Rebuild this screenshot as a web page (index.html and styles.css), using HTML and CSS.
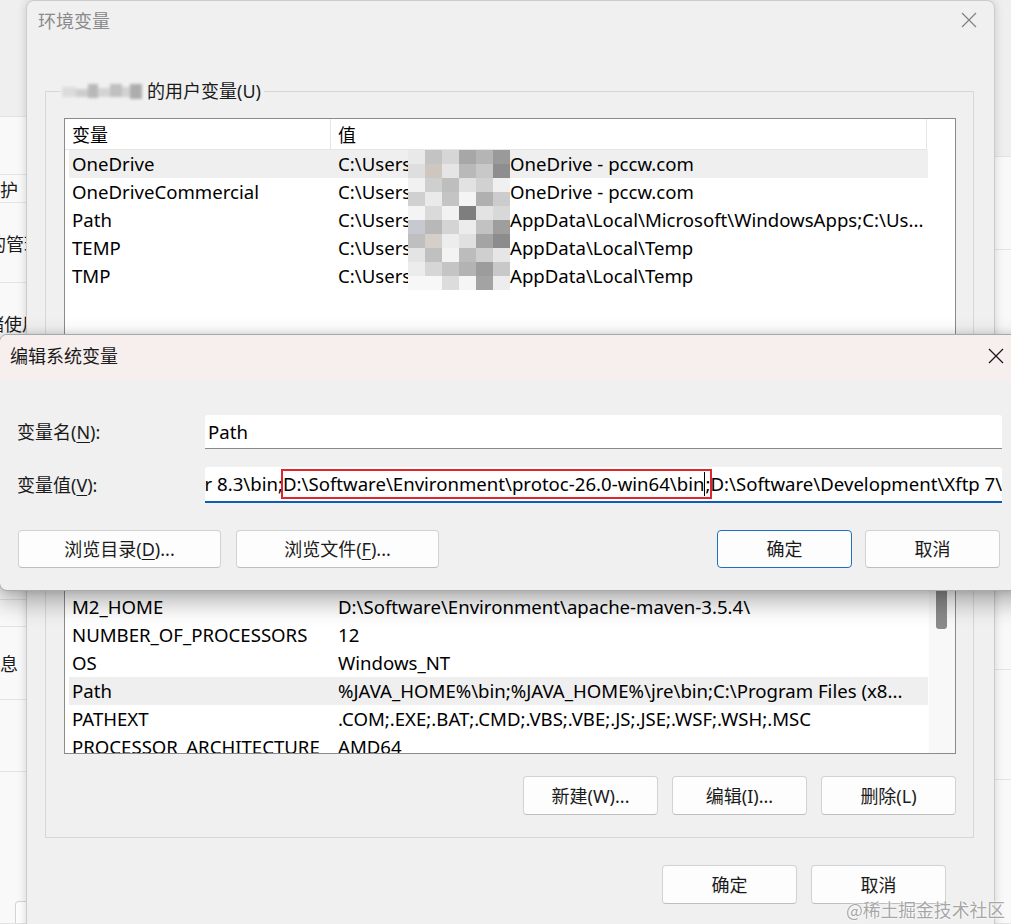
FILE: index.html
```html
<!DOCTYPE html>
<html lang="zh-CN">
<head>
<meta charset="utf-8">
<title>环境变量</title>
<link rel="stylesheet" href="styles.css">
</head>
<body>
<div class="desktop">

  <div class="bgwin">
    <div class="bg-left">
      <div class="bgrow h117 top"></div>
      <div class="bgrow h58"></div>
      <div class="bgrow h28"><span class="bglbl e18">系统保护</span></div>
      <div class="bgrow h80"><span class="bglbl e42">默认应用的管理</span></div>
      <div class="bgrow h80"><span class="bglbl e40">存储使用</span></div>
      <div class="bgrow h237"></div>
      <div class="bgrow h27"></div>
      <div class="bgrow h73"><span class="bglbl e18">系统信息</span></div>
      <div class="bgrow h72"></div>
      <div class="bgrow grow"><div class="bgbtn"></div></div>
    </div>
    <div class="bg-mid"></div>
    <div class="bg-right">
      <div class="bgrow h157 top"></div>
      <div class="bgrow h93"></div>
      <div class="bgrow h420"></div>
      <div class="bgrow h110"></div>
      <div class="bgrow grow"></div>
    </div>
  </div>

  <section class="envwin">
    <header class="env-title">
      <span class="env-title-text">环境变量</span>
      <svg class="close-ico" width="16" height="16" viewBox="0 0 16 16"><path d="M1 1L15 15M15 1L1 15" stroke="#808080" stroke-width="1.2" fill="none"/></svg>
    </header>
    <div class="env-body">
      <fieldset class="group user-group">
        <legend class="legend">
          <svg class="blur-name" width="84" height="22" viewBox="0 0 84 22">
            <defs><filter id="bl" x="-10%" y="-30%" width="120%" height="160%"><feGaussianBlur stdDeviation="1.8"/></filter></defs>
            <g filter="url(#bl)">
              <rect x="2" y="7" width="14" height="10" fill="#dcdcdc"/>
              <rect x="16" y="9" width="12" height="8" fill="#cdcdcd"/>
              <rect x="28" y="4" width="10" height="14" fill="#b8b8b8"/>
              <rect x="38" y="8" width="12" height="9" fill="#d4d4d4"/>
              <rect x="50" y="4" width="12" height="13" fill="#c0c0c0"/>
              <rect x="62" y="7" width="8" height="10" fill="#d2d2d2"/>
              <rect x="70" y="4" width="12" height="15" fill="#adadad"/>
            </g>
          </svg><span>的用户变量(U)</span>
        </legend>
        <div class="list user-list">
          <div class="lv-main">
            <div class="lv-head"><div class="hc1">变量</div><div class="hc2">值</div></div>
            <div class="lv-row sel"><div class="c1">OneDrive</div><div class="c2"><span class="upre">C:\Users\</span><svg class="mosaic" width="102" height="28" viewBox="0 0 102 28"><rect x="0" y="0" width="17" height="14" fill="#e9e9e9"/><rect x="17" y="0" width="17" height="14" fill="#c3c3c3"/><rect x="34" y="0" width="17" height="14" fill="#d6d6d6"/><rect x="51" y="0" width="17" height="14" fill="#a7a7a7"/><rect x="68" y="0" width="17" height="14" fill="#b5b5b5"/><rect x="85" y="0" width="17" height="14" fill="#9a9a9a"/><rect x="0" y="14" width="17" height="14" fill="#dedede"/><rect x="17" y="14" width="17" height="14" fill="#cdc7c0"/><rect x="34" y="14" width="17" height="14" fill="#e5e5e5"/><rect x="51" y="14" width="17" height="14" fill="#b9b9b9"/><rect x="68" y="14" width="17" height="14" fill="#c8c8c8"/><rect x="85" y="14" width="17" height="14" fill="#8e8e8e"/></svg>OneDrive - pccw.com</div></div>
            <div class="lv-row"><div class="c1">OneDriveCommercial</div><div class="c2"><span class="upre">C:\Users\</span><svg class="mosaic" width="102" height="28" viewBox="0 0 102 28"><rect x="0" y="0" width="17" height="14" fill="#f1f1f1"/><rect x="17" y="0" width="17" height="14" fill="#cfcfcf"/><rect x="34" y="0" width="17" height="14" fill="#bebebe"/><rect x="51" y="0" width="17" height="14" fill="#e2e2e2"/><rect x="68" y="0" width="17" height="14" fill="#d1d1d1"/><rect x="85" y="0" width="17" height="14" fill="#f0f0f0"/><rect x="0" y="14" width="17" height="14" fill="#d0d0d0"/><rect x="17" y="14" width="17" height="14" fill="#eaeaea"/><rect x="34" y="14" width="17" height="14" fill="#c4c4c4"/><rect x="51" y="14" width="17" height="14" fill="#f4f4f4"/><rect x="68" y="14" width="17" height="14" fill="#b0b0b0"/><rect x="85" y="14" width="17" height="14" fill="#cccccc"/></svg>OneDrive - pccw.com</div></div>
            <div class="lv-row"><div class="c1">Path</div><div class="c2"><span class="upre">C:\Users\</span><svg class="mosaic" width="102" height="28" viewBox="0 0 102 28"><rect x="0" y="0" width="17" height="14" fill="#f4f4f4"/><rect x="17" y="0" width="17" height="14" fill="#dadada"/><rect x="34" y="0" width="17" height="14" fill="#f2f2f2"/><rect x="51" y="0" width="17" height="14" fill="#7e7e7e"/><rect x="68" y="0" width="17" height="14" fill="#e3e3e3"/><rect x="85" y="0" width="17" height="14" fill="#d8d8d8"/><rect x="0" y="14" width="17" height="14" fill="#c6c9d0"/><rect x="17" y="14" width="17" height="14" fill="#b8b8b8"/><rect x="34" y="14" width="17" height="14" fill="#d4d4d4"/><rect x="51" y="14" width="17" height="14" fill="#ececec"/><rect x="68" y="14" width="17" height="14" fill="#c2c2c2"/><rect x="85" y="14" width="17" height="14" fill="#9e9e9e"/></svg>AppData\Local\Microsoft\WindowsApps;C:\Us...</div></div>
            <div class="lv-row"><div class="c1">TEMP</div><div class="c2"><span class="upre">C:\Users\</span><svg class="mosaic" width="102" height="28" viewBox="0 0 102 28"><rect x="0" y="0" width="17" height="14" fill="#bfbfbf"/><rect x="17" y="0" width="17" height="14" fill="#d5cfca"/><rect x="34" y="0" width="17" height="14" fill="#ededed"/><rect x="51" y="0" width="17" height="14" fill="#e0e0e0"/><rect x="68" y="0" width="17" height="14" fill="#a4a4a4"/><rect x="85" y="0" width="17" height="14" fill="#8c8c8c"/><rect x="0" y="14" width="17" height="14" fill="#e4e4e4"/><rect x="17" y="14" width="17" height="14" fill="#c0c0c0"/><rect x="34" y="14" width="17" height="14" fill="#f3f3f3"/><rect x="51" y="14" width="17" height="14" fill="#bcbcbc"/><rect x="68" y="14" width="17" height="14" fill="#cfcfcf"/><rect x="85" y="14" width="17" height="14" fill="#e6e6e6"/></svg>AppData\Local\Temp</div></div>
            <div class="lv-row"><div class="c1">TMP</div><div class="c2"><span class="upre">C:\Users\</span><svg class="mosaic" width="102" height="28" viewBox="0 0 102 28"><rect x="0" y="0" width="17" height="14" fill="#ececec"/><rect x="17" y="0" width="17" height="14" fill="#d6d6d6"/><rect x="34" y="0" width="17" height="14" fill="#c4c4c4"/><rect x="51" y="0" width="17" height="14" fill="#b3b3b3"/><rect x="68" y="0" width="17" height="14" fill="#9c9c9c"/><rect x="85" y="0" width="17" height="14" fill="#c8c8c8"/><rect x="0" y="14" width="17" height="14" fill="#f7f7f7"/><rect x="17" y="14" width="17" height="14" fill="#f7f7f7"/><rect x="34" y="14" width="17" height="14" fill="#dcdcdc"/><rect x="51" y="14" width="17" height="14" fill="#f5f5f5"/><rect x="68" y="14" width="17" height="14" fill="#a3a3a3"/><rect x="85" y="14" width="17" height="14" fill="#ededed"/></svg>AppData\Local\Temp</div></div>
          </div>
        </div>
        <div class="btnrow">
          <button class="btn">新建(N)...</button>
          <button class="btn">编辑(E)...</button>
          <button class="btn">删除(D)</button>
        </div>
      </fieldset>

      <fieldset class="group sys-group">
        <legend class="legend"><span>系统变量(S)</span></legend>
        <div class="list sys-list">
          <div class="lv-main">
            <div class="lv-head"><div class="hc1">变量</div><div class="hc2">值</div></div>
            <div class="lv-row"><div class="c1">ComSpec</div><div class="c2">C:\Windows\system32\cmd.exe</div></div>
            <div class="lv-row"><div class="c1">DriverData</div><div class="c2">C:\Windows\System32\Drivers\DriverData</div></div>
            <div class="lv-row"><div class="c1">JAVA_HOME</div><div class="c2">D:\Software\Environment\jdk1.8.0_181</div></div>
            <div class="lv-row"><div class="c1">M2_HOME</div><div class="c2">D:\Software\Environment\apache-maven-3.5.4\</div></div>
            <div class="lv-row"><div class="c1">NUMBER_OF_PROCESSORS</div><div class="c2">12</div></div>
            <div class="lv-row"><div class="c1">OS</div><div class="c2">Windows_NT</div></div>
            <div class="lv-row sel"><div class="c1">Path</div><div class="c2">%JAVA_HOME%\bin;%JAVA_HOME%\jre\bin;C:\Program Files (x8...</div></div>
            <div class="lv-row"><div class="c1">PATHEXT</div><div class="c2">.COM;.EXE;.BAT;.CMD;.VBS;.VBE;.JS;.JSE;.WSF;.WSH;.MSC</div></div>
            <div class="lv-row"><div class="c1">PROCESSOR_ARCHITECTURE</div><div class="c2">AMD64</div></div>
          </div>
          <div class="vscroll"><div class="thumb"></div></div>
        </div>
        <div class="btnrow">
          <button class="btn">新建(W)...</button>
          <button class="btn">编辑(I)...</button>
          <button class="btn">删除(L)</button>
        </div>
      </fieldset>

      <div class="env-actions">
        <button class="btn">确定</button>
        <button class="btn">取消</button>
      </div>
    </div>
  </section>

  <section class="editwin">
    <header class="edit-title">
      <span class="edit-title-text">编辑系统变量</span>
      <svg class="close-ico dark" width="16" height="16" viewBox="0 0 16 16"><path d="M1 1L15 15M15 1L1 15" stroke="#1a1a1a" stroke-width="1.3" fill="none"/></svg>
    </header>
    <div class="edit-body">
      <div class="field">
        <label class="flabel">变量名(<u>N</u>):</label>
        <div class="input">Path</div>
      </div>
      <div class="field second">
        <label class="flabel">变量值(<u>V</u>):</label>
        <div class="input focus">
          <span class="pre"><span>D:\Software\Environment\Docker 8.3\bin;</span></span><span class="mark">D:\Software\Environment\protoc-26.0-win64\bin<span class="caret"></span>;</span><span class="rest">D:\Software\Development\Xftp 7\;D:\Software\Development\Xshell 7\</span>
        </div>
      </div>
      <div class="edit-btns">
        <button class="btn wide">浏览目录(<u>D</u>)...</button>
        <button class="btn wide">浏览文件(<u>F</u>)...</button>
        <span class="spacer"></span>
        <button class="btn default">确定</button>
        <button class="btn">取消</button>
      </div>
    </div>
  </section>

  <div class="watermark">@稀土掘金技术社区</div>
</div>
</body>
</html>
```

FILE: styles.css
```css
* { box-sizing: border-box; }
html, body { margin: 0; padding: 0; }
body {
  width: 1011px;
  height: 924px;
  overflow: hidden;
  font-family: "Noto Sans", "Noto Sans CJK SC", sans-serif;
  font-size: 18px;
  color: #000;
  background: #f3f3f3;
}
u { text-decoration: underline; text-underline-offset: 3px; text-decoration-thickness: 1px; }

.desktop { position: relative; width: 1011px; height: 924px; overflow: hidden; }

/* background window */
.bgwin { position: absolute; inset: 0; display: flex; background: #f3f3f3; }
.bg-left { width: 70px; display: flex; flex-direction: column; }
.bg-mid { flex: 1; }
.bg-right { width: 40px; display: flex; flex-direction: column; }
.bgrow {
  flex: none;
  background: #f9f9f9;
  border-bottom: 1px solid #e3e3e3;
  display: flex;
  align-items: center;
  font-family: "Noto Sans CJK SC", sans-serif;
  font-size: 18px;
  line-height: 24px;
  color: #1a1a1a;
  white-space: nowrap;
  overflow: hidden;
}
.bgrow.top { background: #efefef; }
.bgrow.grow { flex: 1; align-items: flex-end; }
.h117 { height: 117px; } .h58 { height: 58px; } .h28 { height: 28px; } .h80 { height: 80px; }
.h237 { height: 237px; } .h27 { height: 27px; } .h73 { height: 73px; }
.h72 { height: 72px; } .h157 { height: 157px; } .h93 { height: 93px; } .h420 { height: 420px; }
.h110 { height: 110px; }
.bglbl { display: flex; justify-content: flex-end; flex: none; }
.e18 { width: 18px; } .e42 { width: 42px; } .e40 { width: 40px; }
.bgbtn { width: 60px; height: 22px; margin-left: 15px; border: 1px solid #d3d3d3; border-bottom: none; border-radius: 4px 4px 0 0; background: #fdfdfd; }

/* environment variables window */
.envwin {
  position: absolute;
  left: 26px;
  top: 0;
  width: 969px;
  height: 980px;
  background: #f0f0f0;
  border: 1px solid #cbcbcb;
  border-radius: 8px;
  box-shadow: 0 0 10px rgba(0,0,0,0.16);
}
.env-title {
  height: 40px;
  display: flex;
  align-items: center;
  padding-left: 11px;
  padding-right: 17px;
}
.env-title-text {
  font-family: "Noto Sans CJK SC", sans-serif;
  color: #8a8a8a;
  font-size: 18px;
  line-height: 24px;
  margin-top: -2px;
}
.close-ico { margin-left: auto; flex: none; }
.env-title .close-ico { margin-top: -2px; }

.env-body { padding: 38px 20px 0 18px; }

.group {
  margin: 0;
  border: 1px solid #d7d7d7;
  border-radius: 0;
  padding: 15px 17px 22px 18px;
  min-width: 0;
}
.legend {
  padding: 0 3px 0 0;
  margin-left: -4px;
  line-height: 24px;
  height: 24px;
  font-family: "Noto Sans", "Noto Sans CJK SC", sans-serif;
  display: flex;
  align-items: center;
  color: #1a1a1a;
}
.blur-name { flex: none; margin-right: 3px; }
.sys-group { margin-top: 9px; }

.list {
  background: #fff;
  border: 1px solid #8b8b8b;
  display: flex;
  overflow: hidden;
}
.user-list { height: 226px; }
.sys-list { height: 277px; }
.lv-main { flex: 1; min-width: 0; overflow: hidden; }
.lv-head {
  display: flex;
  height: 31px;
  width: 862px;
  border-bottom: 1px solid #e6e6e6;
  border-right: 1px solid #e6e6e6;
  font-family: "Noto Sans CJK SC", sans-serif;
  line-height: 30px;
}
.hc1 { width: 265px; padding-left: 7px; }
.hc2 { flex: 1; border-left: 1px solid #e6e6e6; padding-left: 7px; }
.lv-row {
  display: flex;
  height: 28px;
  line-height: 28px;
  width: 859px;
  margin-left: 4px;
  white-space: nowrap;
  font-size: 18.6px;
}
.lv-row.sel { background: #efefef; }
.c1 { width: 261px; padding-left: 3px; overflow: hidden; flex: none; }
.c2 { flex: 1; padding-left: 8px; overflow: hidden; display: flex; align-items: center; }
.upre { display: inline-block; width: 70px; overflow: hidden; flex: none; }
.mosaic { flex: none; display: block; }

.vscroll { width: 26px; flex: none; background: #f8f8f8; }
.thumb { width: 11px; height: 61px; margin: 90px 0 0 7px; background: #8a8a8a; border-radius: 3px; }

.btnrow { display: flex; justify-content: flex-end; gap: 14px; margin-top: 22px; }
.user-group .btnrow { margin-top: 23px; }

.btn {
  height: 39px;
  width: 135px;
  padding: 0;
  border: 1px solid #d2d2d2;
  border-bottom-color: #bebebe;
  border-radius: 4px;
  background: #fdfdfd;
  font-family: "Noto Sans", "Noto Sans CJK SC", sans-serif;
  font-size: 18px;
  line-height: 24px;
  color: #1b1b1b;
  display: flex;
  align-items: center;
  justify-content: center;
  flex: none;
}
.env-actions { display: flex; justify-content: flex-end; gap: 14px; margin-top: 27px; padding-right: 28px; }

/* edit dialog */
.editwin {
  position: absolute;
  left: -1px;
  top: 334px;
  width: 1032px;
  background: #f0f0f0;
  border: 1px solid #a9a9a9;
  border-radius: 8px;
  box-shadow: 0 10px 26px rgba(0,0,0,0.33), 0 0 8px rgba(0,0,0,0.12);
  overflow: hidden;
}
.edit-title {
  height: 46px;
  background: #f7eeee;
  display: flex;
  align-items: flex-start;
  padding: 8px 26px 0 10px;
}
.edit-title-text { font-family: "Noto Sans CJK SC", sans-serif; font-size: 18px; line-height: 24px; color: #1a1a1a; }
.edit-title .close-ico { margin-top: 5px; }

.edit-body { padding: 34px 28px 22px 17px; }
.field { display: flex; align-items: center; }
.field.second { margin-top: 18px; }
.flabel { width: 188px; flex: none; font-family: "Noto Sans", "Noto Sans CJK SC", sans-serif; line-height: 24px; color: #1a1a1a; }
.input {
  flex: 1;
  height: 34px;
  background: #fff;
  border-bottom: 1px solid #8a8a8a;
  border-radius: 3px 3px 0 0;
  padding-left: 3px;
  line-height: 30px;
  white-space: nowrap;
  overflow: hidden;
  display: flex;
  align-items: center;
  font-size: 18.6px;
}
.input.focus { height: 36px; border-bottom: 2px solid #0a5fb4; padding-left: 0; }
.pre { width: 78px; flex: none; display: flex; justify-content: flex-end; overflow: hidden; }
.pre span { flex: none; }
.mark {
  flex: none;
  display: inline-flex;
  align-items: center;
  height: 26px;
  line-height: 26px;
  outline: 2px solid #e0252b;
  outline-offset: 0;
}
.caret { display: inline-block; width: 1px; height: 24px; background: #000; }
.rest { flex: none; }

.edit-btns { display: flex; align-items: center; gap: 15px; margin-top: 27px; padding-left: 1px; padding-right: 2px; }
.edit-btns .btn { height: 38px; }
.edit-btns .btn.wide { width: 203px; }
.edit-btns .spacer { flex: 1; }
.edit-btns .btn.default { border: 1px solid #1f6fc0; margin-right: -2px; }

.watermark {
  position: absolute;
  right: 6px;
  bottom: 4px;
  font-family: "Noto Sans CJK SC", sans-serif;
  font-size: 17.8px;
  line-height: 22px;
  color: rgba(150,150,150,0.85);
  text-shadow: 0 0 2px #fff, 0 0 2px #fff;
}
```
